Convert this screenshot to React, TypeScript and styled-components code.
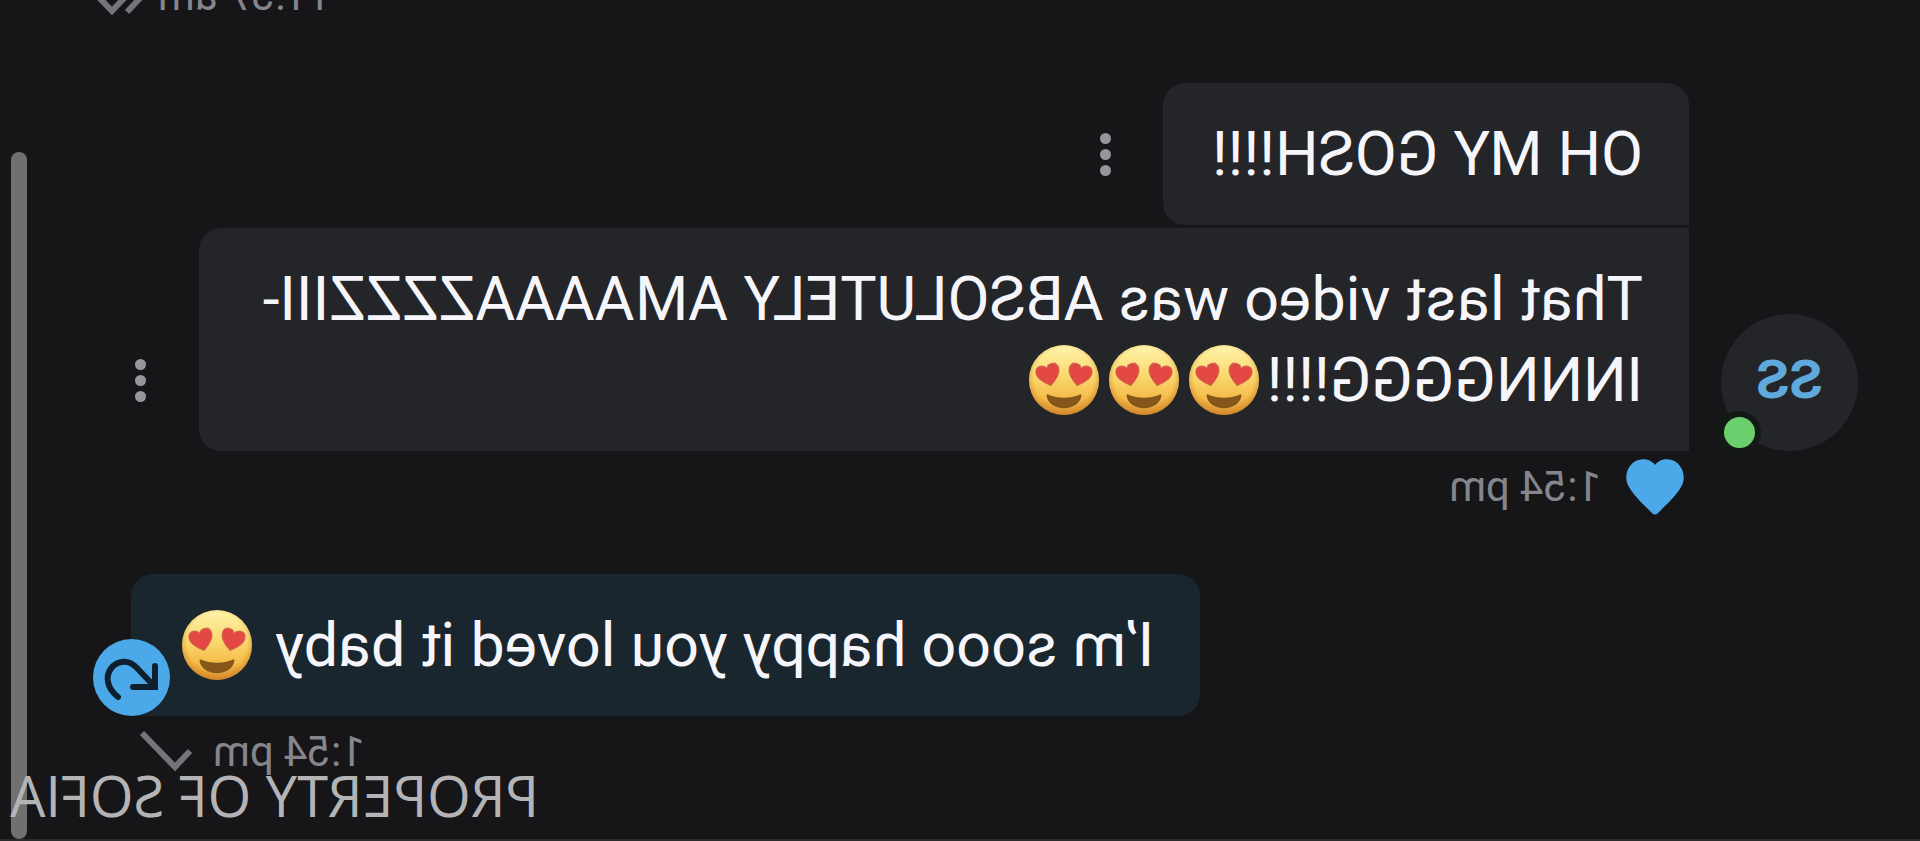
import React from "react";
import styled, { createGlobalStyle } from "styled-components";

const GlobalStyle = createGlobalStyle`
  * { box-sizing: border-box; }
  body { margin: 0; background: #161618; }
`;

/* The whole conversation is shown as a mirror image. */
const Screen = styled.main`
  position: relative;
  display: flex;
  flex-direction: column;
  justify-content: flex-end;
  height: 100vh;
  overflow: hidden;
  padding: 0 78px 62px 62px;
  border-bottom: 2px solid #2b2b2e;
  background: #161618;
  color: #f6f6fa;
  font-family: Roboto, "Liberation Sans", sans-serif;
  transform: scaleX(-1);
`;

const Group = styled.section<{ $own?: boolean }>`
  display: flex;
  flex: none;
  align-items: flex-end;
  justify-content: ${(p) => (p.$own ? "flex-end" : "flex-start")};
  gap: 32px;
  margin-top: 62px;
`;

const Stack = styled.div<{ $own?: boolean }>`
  display: flex;
  flex: 1;
  flex-direction: column;
  align-items: ${(p) => (p.$own ? "flex-end" : "stretch")};
  gap: 3px;
  min-width: 0;
  padding-right: 53px;
`;

const Row = styled.div`
  display: flex;
  align-items: flex-end;
  gap: 48px;
`;

const Bubble = styled.div<{ $kind: "first" | "last" | "own" }>`
  position: relative;
  flex: ${(p) => (p.$kind === "last" ? "1" : "none")};
  padding: 31px 49px 30px 46px;
  border-radius: ${(p) =>
    p.$kind === "first" ? "22px 22px 22px 0" : p.$kind === "last" ? "0 22px 22px 0" : "22px 22px 0 22px"};
  background: ${(p) => (p.$kind === "own" ? "#1a262e" : "#242529")};
  font-size: 61px;
  line-height: 81px;
  white-space: nowrap;
`;

const MenuButton = styled.button`
  display: flex;
  flex: none;
  flex-direction: column;
  align-items: center;
  justify-content: center;
  gap: 5px;
  width: 20px;
  height: 141px;
  padding: 0;
  border: 0;
  background: none;
`;

const Dot = styled.span`
  width: 11px;
  height: 11px;
  border-radius: 50%;
  background: #96979c;
`;

const Avatar = styled.div`
  position: relative;
  display: flex;
  flex: none;
  align-items: center;
  justify-content: center;
  width: 137px;
  height: 137px;
  margin-bottom: 61px;
  padding-bottom: 6px;
  border-radius: 50%;
  background: #242529;
  color: #5fa9dc;
  font-size: 54px;
  font-weight: 700;
`;

const Online = styled.span`
  position: absolute;
  right: -3px;
  bottom: -3px;
  width: 43px;
  height: 43px;
  border: 6px solid #131a14;
  border-radius: 50%;
  background: #6ccf6e;
`;

const Meta = styled.div<{ $own?: boolean }>`
  display: flex;
  align-items: center;
  gap: ${(p) => (p.$own ? "20px" : "25px")};
  height: 50px;
  color: #85868d;
  font-size: 42px;
  line-height: 50px;
  white-space: nowrap;

  ${Stack} > & {
    margin-top: 8px;
    padding: ${(p) => (p.$own ? "0 8px 0 0" : "0 0 0 5px")};
  }
`;

const LikeButton = styled.button`
  display: flex;
  padding: 0;
  border: 0;
  background: none;
`;

const RetryButton = styled.button`
  position: absolute;
  right: -38px;
  bottom: 0;
  display: flex;
  width: 77px;
  height: 77px;
  padding: 0;
  border: 0;
  border-radius: 50%;
  background: #4ba9ea;
`;

const ScrollThumb = styled.div`
  position: absolute;
  top: 152px;
  right: 11px;
  bottom: 0;
  width: 16px;
  border-radius: 8px;
  background: #707070;
`;

const Watermark = styled.div`
  position: absolute;
  right: 10px;
  bottom: 6px;
  color: #b4b4b6;
  font-family: "Open Sans", sans-serif;
  font-size: 56px;
  line-height: 76px;
`;

const EmojiSvg = styled.svg`
  width: 70px;
  height: 70px;
  margin: 0 2px 0 8px;
  vertical-align: -14px;
`;

const heart =
  "M0 11C-7 6-12 1-12-4C-12-9-9-11-6-11C-3-11-1-10 0-7C1-10 3-11 6-11C9-11 12-9 12-4C12 1 7 6 0 11Z";

const Emoji = () => (
  <EmojiSvg viewBox="0 0 72 72" role="img" aria-label="Smiling face with heart-eyes">
    <defs>
      <linearGradient id="face" x1="0" y1="0" x2="0" y2="1">
        <stop offset="0" stopColor="#fff3ab" />
        <stop offset="0.4" stopColor="#fbdc74" />
        <stop offset="0.75" stopColor="#f5bd4a" />
        <stop offset="1" stopColor="#dc9233" />
      </linearGradient>
      <radialGradient id="shade" cx="0.5" cy="0.46" r="0.54">
        <stop offset="0.78" stopColor="#d98a2b" stopOpacity="0" />
        <stop offset="1" stopColor="#c27a22" stopOpacity="0.6" />
      </radialGradient>
    </defs>
    <circle cx="36" cy="36" r="36" fill="url(#face)" />
    <circle cx="36" cy="36" r="36" fill="url(#shade)" />
    <g fill="#e34845" stroke="#cf6a4c" strokeWidth="1">
      <path d={heart} transform="translate(20 31) rotate(-14)" />
      <path d={heart} transform="translate(52 31) rotate(14)" />
    </g>
    <path d="M18 52C18 50 20 51 22 52C31 55 41 55 50 52C52 51 54 50 54 52C53 60 45 65 36 65C27 65 19 60 18 52Z" fill="#85561a" />
  </EmojiSvg>
);

const Tick = ({ double }: { double?: boolean }) => (
  <svg
    width={double ? 60 : 54}
    height="42"
    viewBox={double ? "-8 0 60 42" : "0 0 54 42"}
    fill="none"
    stroke="#74757b"
    strokeWidth="6"
    overflow="visible"
  >
    <path d="M3 20L18 36L51 2" />
    {double && <path d="M-13 20L3 37" />}
  </svg>
);

const Menu = () => (
  <MenuButton aria-label="Message options">
    <Dot />
    <Dot />
    <Dot />
  </MenuButton>
);

export default function App() {
  return (
    <>
      <GlobalStyle />
      <Screen>
        <Group $own>
          <Meta $own>
            <span>11:57 am</span>
            <Tick double />
          </Meta>
        </Group>

        <Group>
          <Avatar>
            SS
            <Online />
          </Avatar>
          <Stack>
            <Row>
              <Bubble $kind="first">OH MY GOSH!!!!</Bubble>
              <Menu />
            </Row>
            <Row>
              <Bubble $kind="last">
                That last video was ABSOLUTELY AMAAAAZZZZIII-
                <br />
                INNNGGGG!!!!
                <Emoji />
                <Emoji />
                <Emoji />
              </Bubble>
              <Menu />
            </Row>
            <Meta>
              <LikeButton aria-label="Liked">
                <svg width="58" height="56" viewBox="0 0 58 56" fill="#4ba9ea">
                  <path d="M29 6C34-1 44-1 50 3C58 9 60 20 55 28C50 37 41 45 32 54Q29 57 26 54C17 45 8 37 3 28C-2 20 0 9 8 3C14-1 24-1 29 6Z" />
                </svg>
              </LikeButton>
              <span>1:54 pm</span>
            </Meta>
          </Stack>
        </Group>

        <Group $own>
          <Stack $own>
            <Bubble $kind="own">
              I’m sooo happy you loved it baby <Emoji />
              <RetryButton aria-label="Send again">
                <svg width="77" height="77" viewBox="0 0 77 77" fill="none" stroke="#0e1f2e" strokeWidth="6" strokeLinecap="round">
                  <path d="M15 27V48H37" />
                  <path d="M16 47L33 29C38 24 43 22 48 23C57 24 64 33 62 43C61 49 57 54 52 58" />
                </svg>
              </RetryButton>
            </Bubble>
            <Meta $own>
              <span>1:54 pm</span>
              <Tick />
            </Meta>
          </Stack>
        </Group>

        <ScrollThumb />
        <Watermark>PROPERTY OF SOFIA</Watermark>
      </Screen>
    </>
  );
}
